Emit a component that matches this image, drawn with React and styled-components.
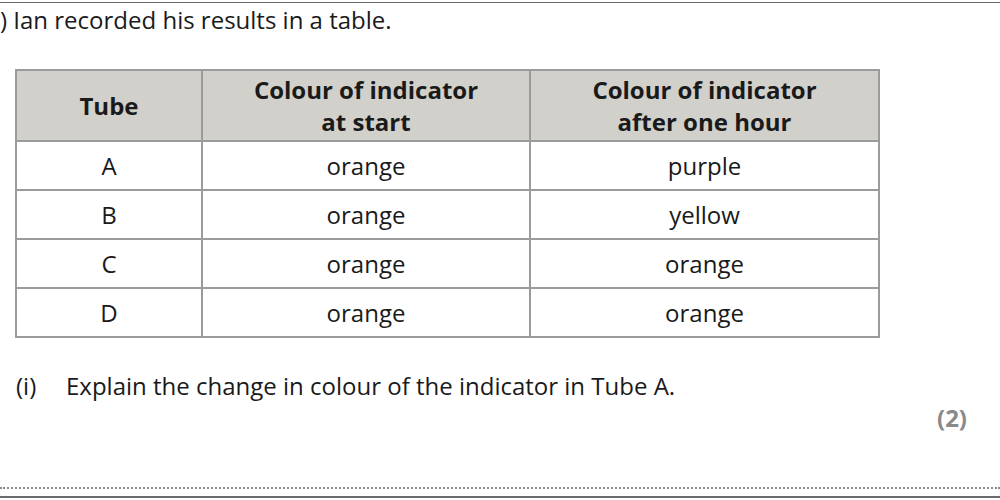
import { createGlobalStyle, styled } from "styled-components";

const GlobalStyle = createGlobalStyle`
  body {
    margin: 0;
    background: #ffffff;
    font-family: "Open Sans", "Noto Sans", sans-serif;
    color: #1a1a1a;
  }
`;

const Page = styled.div`
  width: 1000px;
  height: 500px;
  display: flex;
  flex-direction: column;
  overflow: hidden;
`;

const TopRule = styled.div`
  margin-top: 2px;
  height: 1px;
  background: #6a6a6a;
`;

const Intro = styled.p`
  margin: 4px 0 0 0;
  font-size: 24px;
  line-height: 26px;
`;

const Table = styled.table`
  margin: 36px 0 0 15px;
  border-collapse: collapse;
  table-layout: fixed;
  width: 863px;
`;

const Head = styled.th`
  background: #d1d0ca;
  border: 2px solid #9b9b9b;
  height: 69px;
  font-size: 24px;
  line-height: 32px;
  font-weight: 700;
  text-align: center;
  padding: 0;
`;

const Cell = styled.td`
  border: 2px solid #9b9b9b;
  height: 47px;
  font-size: 24px;
  text-align: center;
  padding: 0;
`;

const Question = styled.div`
  margin: 35px 0 0 16px;
  display: flex;
  font-size: 24px;
  line-height: 26px;
`;

const Label = styled.span`
  width: 50px;
`;

const Marks = styled.div`
  align-self: flex-end;
  margin: 5px 33px 0 0;
  font-size: 24px;
  line-height: 28px;
  font-weight: 700;
  color: #8a8a8a;
`;

const Dotted = styled.div`
  margin-top: 55px;
  border-top: 2px dotted #8a8a8a;
`;

const BottomRule = styled.div`
  margin-top: 7px;
  height: 2px;
  background: #6a6a6a;
`;

const rows = [
  ["A", "orange", "purple"],
  ["B", "orange", "yellow"],
  ["C", "orange", "orange"],
  ["D", "orange", "orange"],
];

export default function App() {
  return (
    <Page>
      <GlobalStyle />
      <TopRule />
      <Intro>) Ian recorded his results in a table.</Intro>
      <Table>
        <colgroup>
          <col style={{ width: 186 }} />
          <col style={{ width: 328 }} />
          <col style={{ width: 349 }} />
        </colgroup>
        <thead>
          <tr>
            <Head>Tube</Head>
            <Head>
              Colour of indicator
              <br />
              at start
            </Head>
            <Head>
              Colour of indicator
              <br />
              after one hour
            </Head>
          </tr>
        </thead>
        <tbody>
          {rows.map((r) => (
            <tr key={r[0]}>
              {r.map((c, i) => (
                <Cell key={i}>{c}</Cell>
              ))}
            </tr>
          ))}
        </tbody>
      </Table>
      <Question>
        <Label>(i)</Label>
        <span>Explain the change in colour of the indicator in Tube A.</span>
      </Question>
      <Marks>(2)</Marks>
      <Dotted />
      <BottomRule />
    </Page>
  );
}
